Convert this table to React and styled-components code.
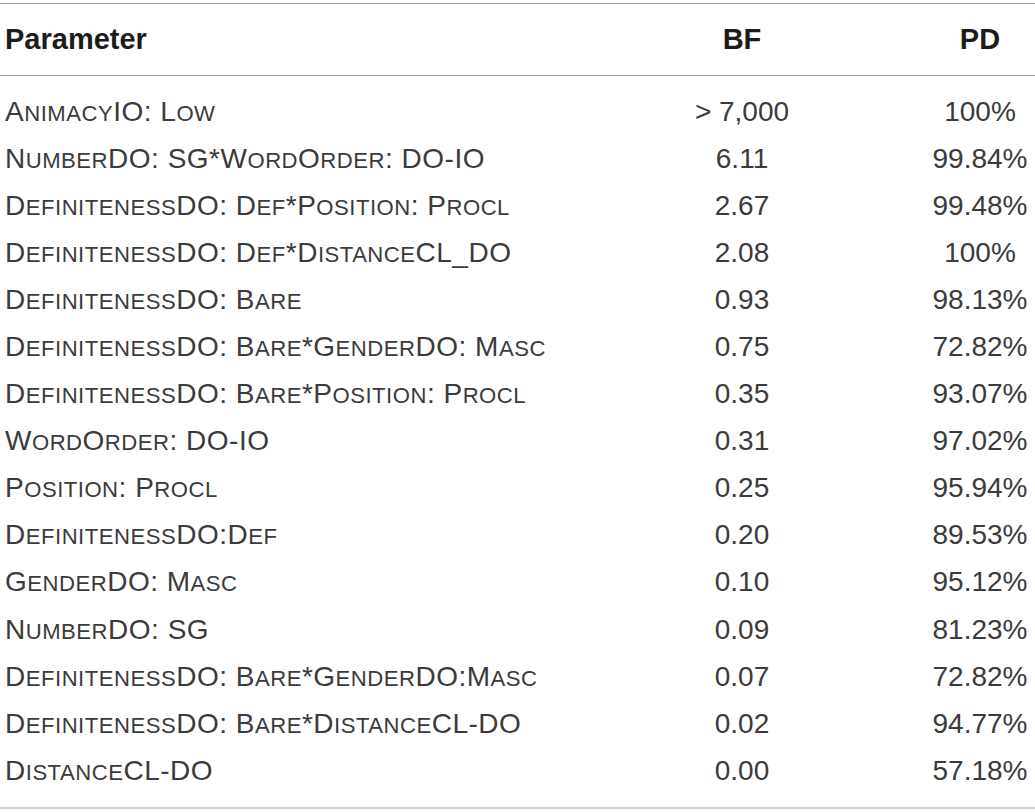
import React from 'react';
import styled, { createGlobalStyle } from 'styled-components';

const GlobalStyle = createGlobalStyle`
  html, body {
    margin: 0;
    padding: 0;
    background: #ffffff;
  }
`;

const TableBlock = styled.div`
  width: 1035px;
  height: 812px;
  box-sizing: border-box;
  padding-top: 3px;
  background: #ffffff;
`;

const HeaderRow = styled.div`
  display: grid;
  grid-template-columns: 1fr 160px 110px;
  column-gap: 103px;
  align-items: center;
  height: 71px;
  padding-left: 5px;
  border-top: 1px solid #a8a8a8;
  border-bottom: 1px solid #a8a8a8;
  font-family: "Liberation Sans", Arial, sans-serif;
  font-weight: bold;
  font-size: 29px;
  color: #1c1c1c;
`;

const Body = styled.div`
  padding: 12px 0 13px;
  border-bottom: 2px solid #d2d2d2;
`;

const Row = styled.div`
  display: grid;
  grid-template-columns: 1fr 160px 110px;
  column-gap: 103px;
  align-items: center;
  height: 47.1px;
  padding-left: 5px;
  font-family: "Liberation Sans", Arial, sans-serif;
  font-weight: normal;
  font-size: 28px;
  color: #3b3b3b;
`;

const Cell = styled.div`
  text-align: ${(p) => p.align || 'left'};
  white-space: nowrap;
`;

const ParamCell = styled(Cell)`
  letter-spacing: 0.5px;
`;

const Small = styled.span`
  font-size: 0.79em;
  text-transform: uppercase;
`;

// lowercase runs are drawn as small capitals
const SmallCaps = ({ text }) =>
  text.split(/([a-z]+)/).map((part, i) =>
    /^[a-z]+$/.test(part) ? <Small key={i}>{part}</Small> : part
  );

const rows = [
  ['AnimacyIO: Low', '> 7,000', '100%'],
  ['NumberDO: SG*WordOrder: DO-IO', '6.11', '99.84%'],
  ['DefinitenessDO: Def*Position: Procl', '2.67', '99.48%'],
  ['DefinitenessDO: Def*DistanceCL_DO', '2.08', '100%'],
  ['DefinitenessDO: Bare', '0.93', '98.13%'],
  ['DefinitenessDO: Bare*GenderDO: Masc', '0.75', '72.82%'],
  ['DefinitenessDO: Bare*Position: Procl', '0.35', '93.07%'],
  ['WordOrder: DO-IO', '0.31', '97.02%'],
  ['Position: Procl', '0.25', '95.94%'],
  ['DefinitenessDO:Def', '0.20', '89.53%'],
  ['GenderDO: Masc', '0.10', '95.12%'],
  ['NumberDO: SG', '0.09', '81.23%'],
  ['DefinitenessDO: Bare*GenderDO:Masc', '0.07', '72.82%'],
  ['DefinitenessDO: Bare*DistanceCL-DO', '0.02', '94.77%'],
  ['DistanceCL-DO', '0.00', '57.18%'],
];

const App = () => (
  <>
    <GlobalStyle />
    <TableBlock>
      <HeaderRow>
        <Cell>Parameter</Cell>
        <Cell align="center">BF</Cell>
        <Cell align="center">PD</Cell>
      </HeaderRow>
      <Body>
        {rows.map(([param, bf, pd]) => (
          <Row key={param}>
            <ParamCell>
              <SmallCaps text={param} />
            </ParamCell>
            <Cell align="center">{bf}</Cell>
            <Cell align="center">{pd}</Cell>
          </Row>
        ))}
      </Body>
    </TableBlock>
  </>
);

export default App;
